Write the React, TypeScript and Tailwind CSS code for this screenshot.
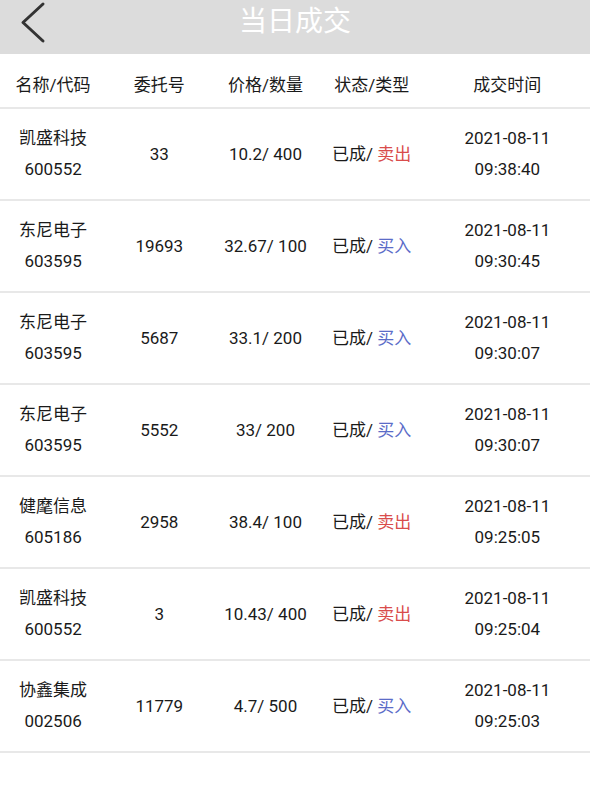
const trades = [
  { name: "凯盛科技", code: "600552", no: "33", price: "10.2/ 400", side: "卖出", date: "2021-08-11", time: "09:38:40" },
  { name: "东尼电子", code: "603595", no: "19693", price: "32.67/ 100", side: "买入", date: "2021-08-11", time: "09:30:45" },
  { name: "东尼电子", code: "603595", no: "5687", price: "33.1/ 200", side: "买入", date: "2021-08-11", time: "09:30:07" },
  { name: "东尼电子", code: "603595", no: "5552", price: "33/ 200", side: "买入", date: "2021-08-11", time: "09:30:07" },
  { name: "健麾信息", code: "605186", no: "2958", price: "38.4/ 100", side: "卖出", date: "2021-08-11", time: "09:25:05" },
  { name: "凯盛科技", code: "600552", no: "3", price: "10.43/ 400", side: "卖出", date: "2021-08-11", time: "09:25:04" },
  { name: "协鑫集成", code: "002506", no: "11779", price: "4.7/ 500", side: "买入", date: "2021-08-11", time: "09:25:03" },
];

const font = { fontFamily: 'Roboto, "Noto Sans CJK SC", sans-serif' };

export default function App() {
  return (
    <div className="min-h-[800px] w-[590px] bg-white text-[#1a1a1a]" style={font}>
      <header className="relative flex h-[54px] items-start justify-center bg-[#dcdcdc] pt-[7px]">
        <button className="absolute left-[16px] top-[1px] flex h-[44px] w-[32px] items-center justify-center">
          <svg width="28" height="44" viewBox="0 0 28 44" fill="none">
            <path d="M25 3 L5 21.5 L25 40" stroke="#333" strokeWidth="3" strokeLinecap="round" strokeLinejoin="round" />
          </svg>
        </button>
        <h1 className="text-[28px] font-normal leading-[30px] text-white">当日成交</h1>
      </header>

      <div className="grid h-[55px] grid-cols-[18%_18%_18%_18%_28%] items-center border-b-2 border-[#e8e8e8] pt-[11px] text-center text-[17px]">
        <div>名称/代码</div>
        <div>委托号</div>
        <div>价格/数量</div>
        <div>状态/类型</div>
        <div>成交时间</div>
      </div>

      {trades.map((t, i) => (
        <div
          key={i}
          className="grid h-[92px] grid-cols-[18%_18%_18%_18%_28%] items-center border-b-2 border-[#e8e8e8] text-center text-[17px] leading-[31px]"
        >
          <div>
            <div>{t.name}</div>
            <div>{t.code}</div>
          </div>
          <div>{t.no}</div>
          <div>{t.price}</div>
          <div>
            已成/ <span className={t.side === "卖出" ? "text-[#d94c4c]" : "text-[#5b6cc8]"}>{t.side}</span>
          </div>
          <div>
            <div>{t.date}</div>
            <div>{t.time}</div>
          </div>
        </div>
      ))}
    </div>
  );
}
